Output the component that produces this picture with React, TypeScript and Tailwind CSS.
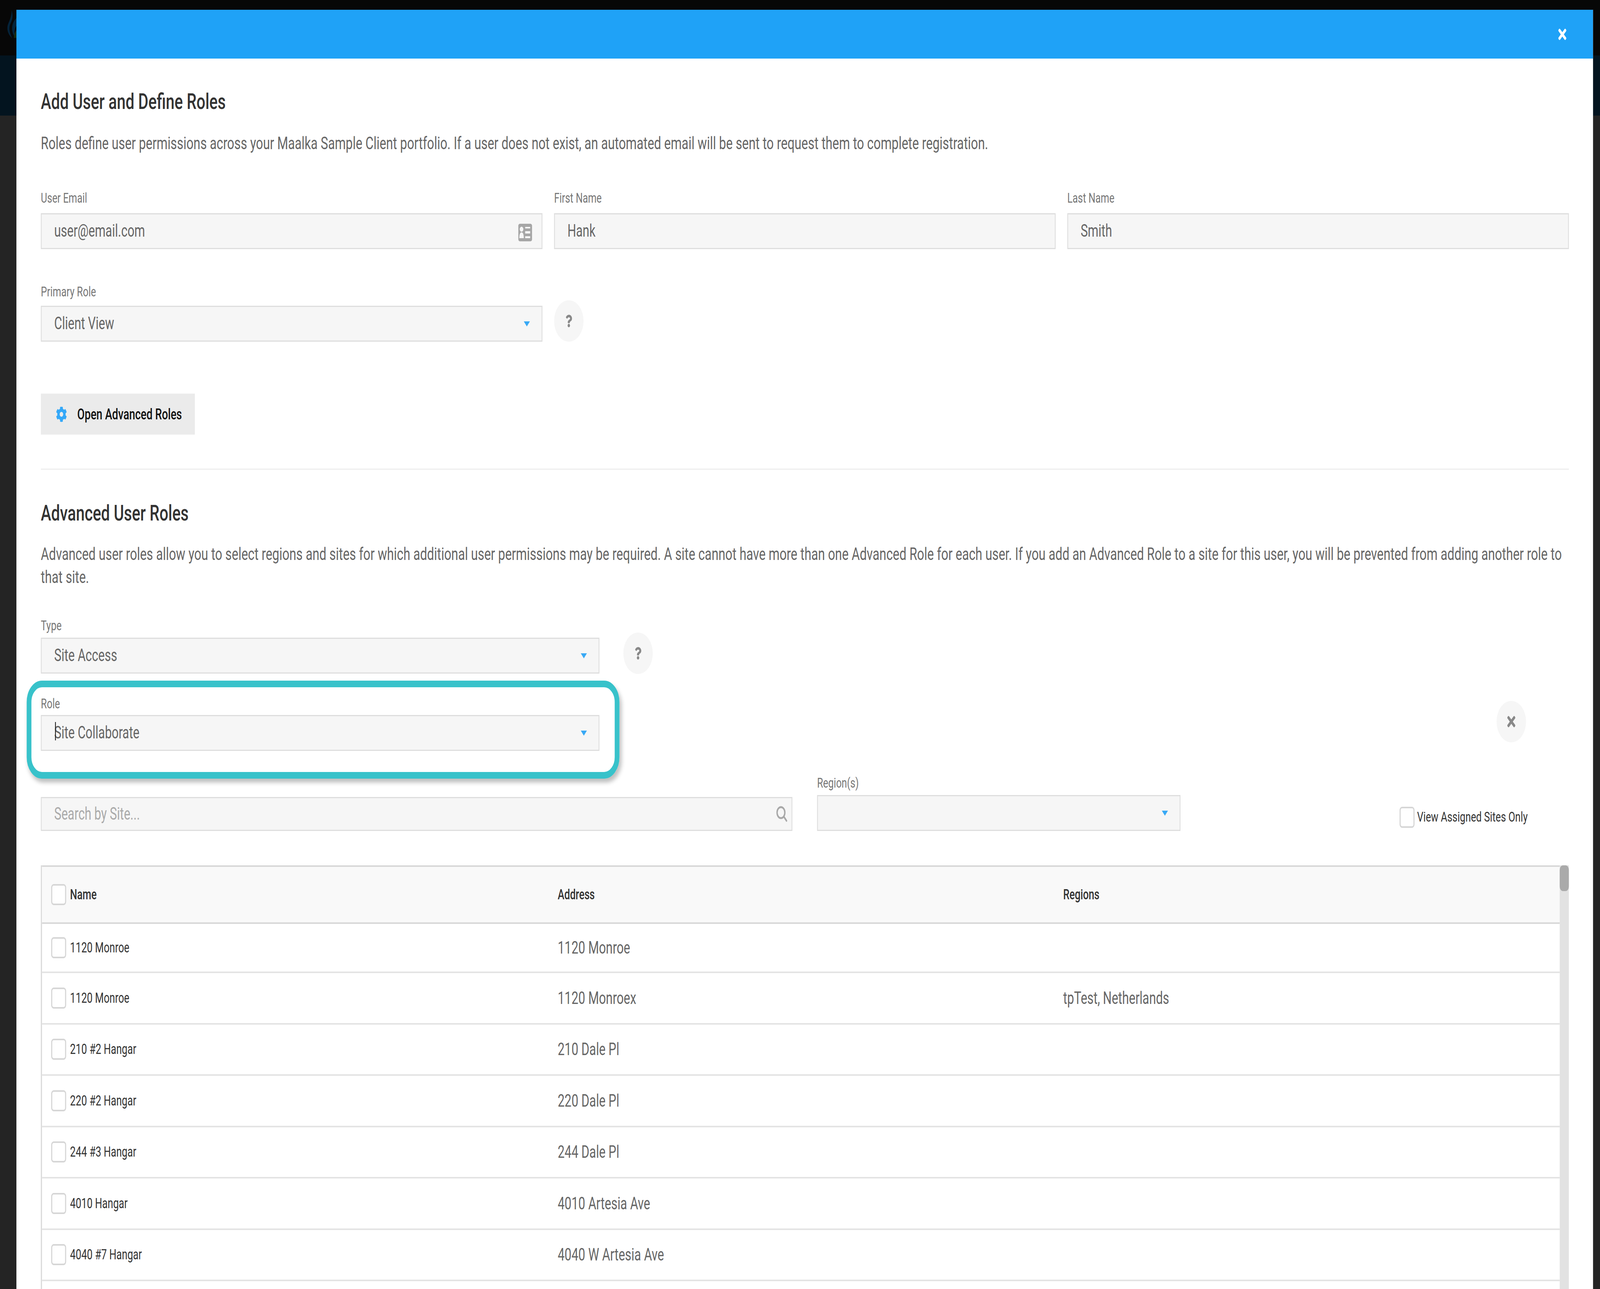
import type { ReactNode } from "react";
import { FaCog, FaQuestion, FaTimes } from "react-icons/fa";

// design is 5755 wide; the window can come up narrower, so fit the width to it
const DESIGN_WIDTH = 5755;

const sites = [
  { name: "1120 Monroe", address: "1120 Monroe", regions: "" },
  { name: "1120 Monroe", address: "1120 Monroex", regions: "tpTest, Netherlands" },
  { name: "210 #2 Hangar", address: "210 Dale Pl", regions: "" },
  { name: "220 #2 Hangar", address: "220 Dale Pl", regions: "" },
  { name: "244 #3 Hangar", address: "244 Dale Pl", regions: "" },
  { name: "4010 Hangar", address: "4010 Artesia Ave", regions: "" },
  { name: "4040 #7 Hangar", address: "4040 W Artesia Ave", regions: "" },
];

function Label({ children }: { children: string }) {
  return <div className="h-[40px] text-[35px] leading-[40px] text-[#777777]">{children}</div>;
}

function Caret() {
  return <span className="h-0 w-0 border-x-[11px] border-t-[13px] border-x-transparent border-t-[#38a9f5]" />;
}

function Box({ value, className = "", children }: { value?: string; className?: string; children?: ReactNode }) {
  return (
    <div className={`flex h-[92px] items-center justify-between border-[3.5px] border-[#dedede] bg-[#f6f6f6] pl-[45px] text-[43.5px] text-[#666666] ${className}`}>
      <span>{value}</span>
      {children}
    </div>
  );
}

function Check() {
  return <span className="block h-[54px] w-[54px] shrink-0 rounded-[9px] border-[4px] border-[#d6d6d6] bg-white" />;
}

function RoundButton({ children }: { children: ReactNode }) {
  return <div className="flex h-[106px] w-[106px] items-center justify-center rounded-full bg-[#f6f6f6] text-[#888888]">{children}</div>;
}

function CardIcon() {
  return (
    <svg viewBox="0 0 50 45" className="mt-[7px] h-[45px] w-[50px]">
      <rect width="50" height="45" rx="6" fill="#a6a6a6" />
      <circle cx="12" cy="14" r="6.5" fill="#f6f6f6" />
      <path d="M4 37c0-10 3-15 8-15s8 5 8 15z" fill="#f6f6f6" />
      <path d="M25 8h18v4H25zM25 19h18v6H25zM25 32h18v5H25z" fill="#f6f6f6" />
    </svg>
  );
}

function SearchIcon() {
  return (
    <svg viewBox="0 0 40 41" className="h-[41px] w-[40px]" fill="none" stroke="#a8a8a8" strokeWidth="5" strokeLinecap="round">
      <circle cx="17" cy="17" r="14" />
      <path d="M28 28l9 10" />
    </svg>
  );
}

function Flame() {
  return (
    <svg viewBox="0 0 33 72" className="absolute left-[26px] top-[26px] h-[72px] w-[33px]" fill="none">
      <path d="M16 0c5 14 4 22-4 34C6 44 6 54 18 72 4 64-3 50 2 38 7 27 16 18 16 0z" fill="#04233a" />
      <path d="M33 20C22 28 14 40 19 56c2 6 6 10 9 14-2-10-5-18 5-30z" fill="#04233a" />
      <path d="M33 52c-5 3-8 8-9 19h9z" fill="#162a10" />
    </svg>
  );
}

export default function App() {
  return (
    <div className="h-[3301px] w-screen overflow-hidden">
      <div
        className="relative h-[3301px] w-[5755px] origin-top-left overflow-hidden bg-[#242424] font-['Roboto','Liberation_Sans',sans-serif]"
        style={{ transform: `scaleX(${window.innerWidth / DESIGN_WIDTH})` }}
      >
        <div className="h-[142px] bg-[#070707]" />
        <div className="h-[154px] bg-[#03141f]" />
        <Flame />

        <div className="absolute bottom-0 left-[59px] top-[25px] w-[5671px] overflow-hidden bg-white">
          <div className="flex h-[125px] items-center justify-end bg-[#1fa2f7] pr-[96px]">
            <FaTimes className="h-[42px] w-[29px] text-white" />
          </div>

          <div className="pl-[88px] pr-[87px] pt-[80px]">
            <h2 className="h-[60px] text-[56px] font-medium leading-[60px] text-[#333333]">Add User and Define Roles</h2>
            <p className="mt-[47px] text-[44.7px] leading-[60px] text-[#666666]">
              Roles define user permissions across your Maalka Sample Client portfolio. If a user does not exist, an automated email will be sent to request them to complete registration.
            </p>

            <div className="mt-[91px] grid grid-cols-3 gap-x-[42px]">
              <div>
                <Label>User Email</Label>
                <Box value="user@email.com" className="mt-[18px] pr-[34px]">
                  <CardIcon />
                </Box>
              </div>
              <div>
                <Label>First Name</Label>
                <Box value="Hank" className="mt-[18px]" />
              </div>
              <div>
                <Label>Last Name</Label>
                <Box value="Smith" className="mt-[18px]" />
              </div>
            </div>

            <div className="mt-[90px] flex items-start">
              <div className="w-[1804px]">
                <Label>Primary Role</Label>
                <Box value="Client View" className="mt-[15px] pr-[42px]">
                  <Caret />
                </Box>
              </div>
              <div className="ml-[42px] mt-[41px]">
                <RoundButton>
                  <FaQuestion className="h-[32px] w-[24px]" />
                </RoundButton>
              </div>
            </div>

            <button className="mt-[133px] flex h-[105px] w-[554px] items-center bg-[#ebebeb] pl-[54px] text-[38.5px] font-medium text-[#111111]">
              <FaCog className="h-[40px] w-[40px] text-[#34a8f8]" />
              <span className="ml-[37px]">Open Advanced Roles</span>
            </button>

            <div className="mt-[87px] h-[3px] bg-[#eeeeee]" />

            <h2 className="mt-[81px] h-[60px] text-[56px] font-medium leading-[60px] text-[#333333]">Advanced User Roles</h2>
            <p className="mt-[46px] text-[44.7px] leading-[59px] text-[#666666]">
              Advanced user roles allow you to select regions and sites for which additional user permissions may be required. A site cannot have more than one Advanced Role for each user. If you add an Advanced Role to a site for this user, you will be prevented from adding another role to
              <br />
              that site.
            </p>

            <div className="mt-[75px] flex items-start">
              <div className="w-[2009px]">
                <Label>Type</Label>
                <Box value="Site Access" className="mt-[10px] h-[90px] pr-[42px]">
                  <Caret />
                </Box>
              </div>
              <div className="ml-[86px] mt-[37px]">
                <RoundButton>
                  <FaQuestion className="h-[32px] w-[24px]" />
                </RoundButton>
              </div>
            </div>

            <div className="mt-[57px] flex items-start justify-between pr-[154px]">
              <div className="relative w-[2009px]">
                <Label>Role</Label>
                <Box value="Site Collaborate" className="relative mt-[8px] pr-[42px]">
                  <span className="absolute left-[48px] top-[15px] h-[47px] w-[3px] bg-[#222222]" />
                  <Caret />
                </Box>
                <div className="absolute -left-[51px] -top-[40px] h-[251px] w-[2132px] rounded-[55px] border-[17px] border-[#38c2ca] shadow-[6px_10px_12px_rgba(0,0,0,0.25)]" />
              </div>
              <div className="mt-[12px]">
                <RoundButton>
                  <FaTimes className="h-[42px] w-[30px]" />
                </RoundButton>
              </div>
            </div>

            <div className="mt-[63px] flex items-start">
              <div className="mt-[55px] flex h-[87px] w-[2703px] items-center justify-between border-[3.5px] border-[#dedede] bg-[#f6f6f6] pl-[45px] pr-[15px] text-[43.5px] text-[#aaaaaa]">
                <span>Search by Site...</span>
                <SearchIcon />
              </div>
              <div className="ml-[89px] w-[1307px]">
                <Label>Region(s)</Label>
                <Box className="mt-[10px] pr-[42px]">
                  <Caret />
                </Box>
              </div>
              <label className="ml-[788px] mt-[80px] flex items-center gap-[9px] text-[35.5px] text-[#333333]">
                <Check />
                View Assigned Sites Only
              </label>
            </div>

            <div className="mt-[88px] flex">
              <div className="w-[5463px] border-l-[4px] border-[#d8d8d8]">
                <div className="grid h-[150px] grid-cols-[1855px_1818px_1fr] items-center border-y-[4px] border-[#d8d8d8] bg-[#f9f9f9] text-[36px] font-medium text-[#333333]">
                  <div className="flex items-center gap-[14px] pl-[33px]">
                    <Check />
                    Name
                  </div>
                  <div>Address</div>
                  <div>Regions</div>
                </div>
                {sites.map((site, i) => (
                  <div key={i} className={`grid grid-cols-[1855px_1818px_1fr] items-center border-b-[4px] border-[#e4e4e4] ${i === 0 ? "h-[126px]" : "h-[131.5px]"}`}>
                    <div className="flex items-center gap-[14px] pl-[33px] text-[36px] text-[#333333]">
                      <Check />
                      {site.name}
                    </div>
                    <div className="text-[44px] text-[#666666]">{site.address}</div>
                    <div className="text-[44px] text-[#666666]">{site.regions}</div>
                  </div>
                ))}
              </div>
              <div className="h-[1100px] w-[33px] bg-[#e2e2e2]">
                <div className="h-[66px] rounded-[12px] bg-[#aaaaaa]" />
              </div>
            </div>
          </div>
        </div>
      </div>
    </div>
  );
}
